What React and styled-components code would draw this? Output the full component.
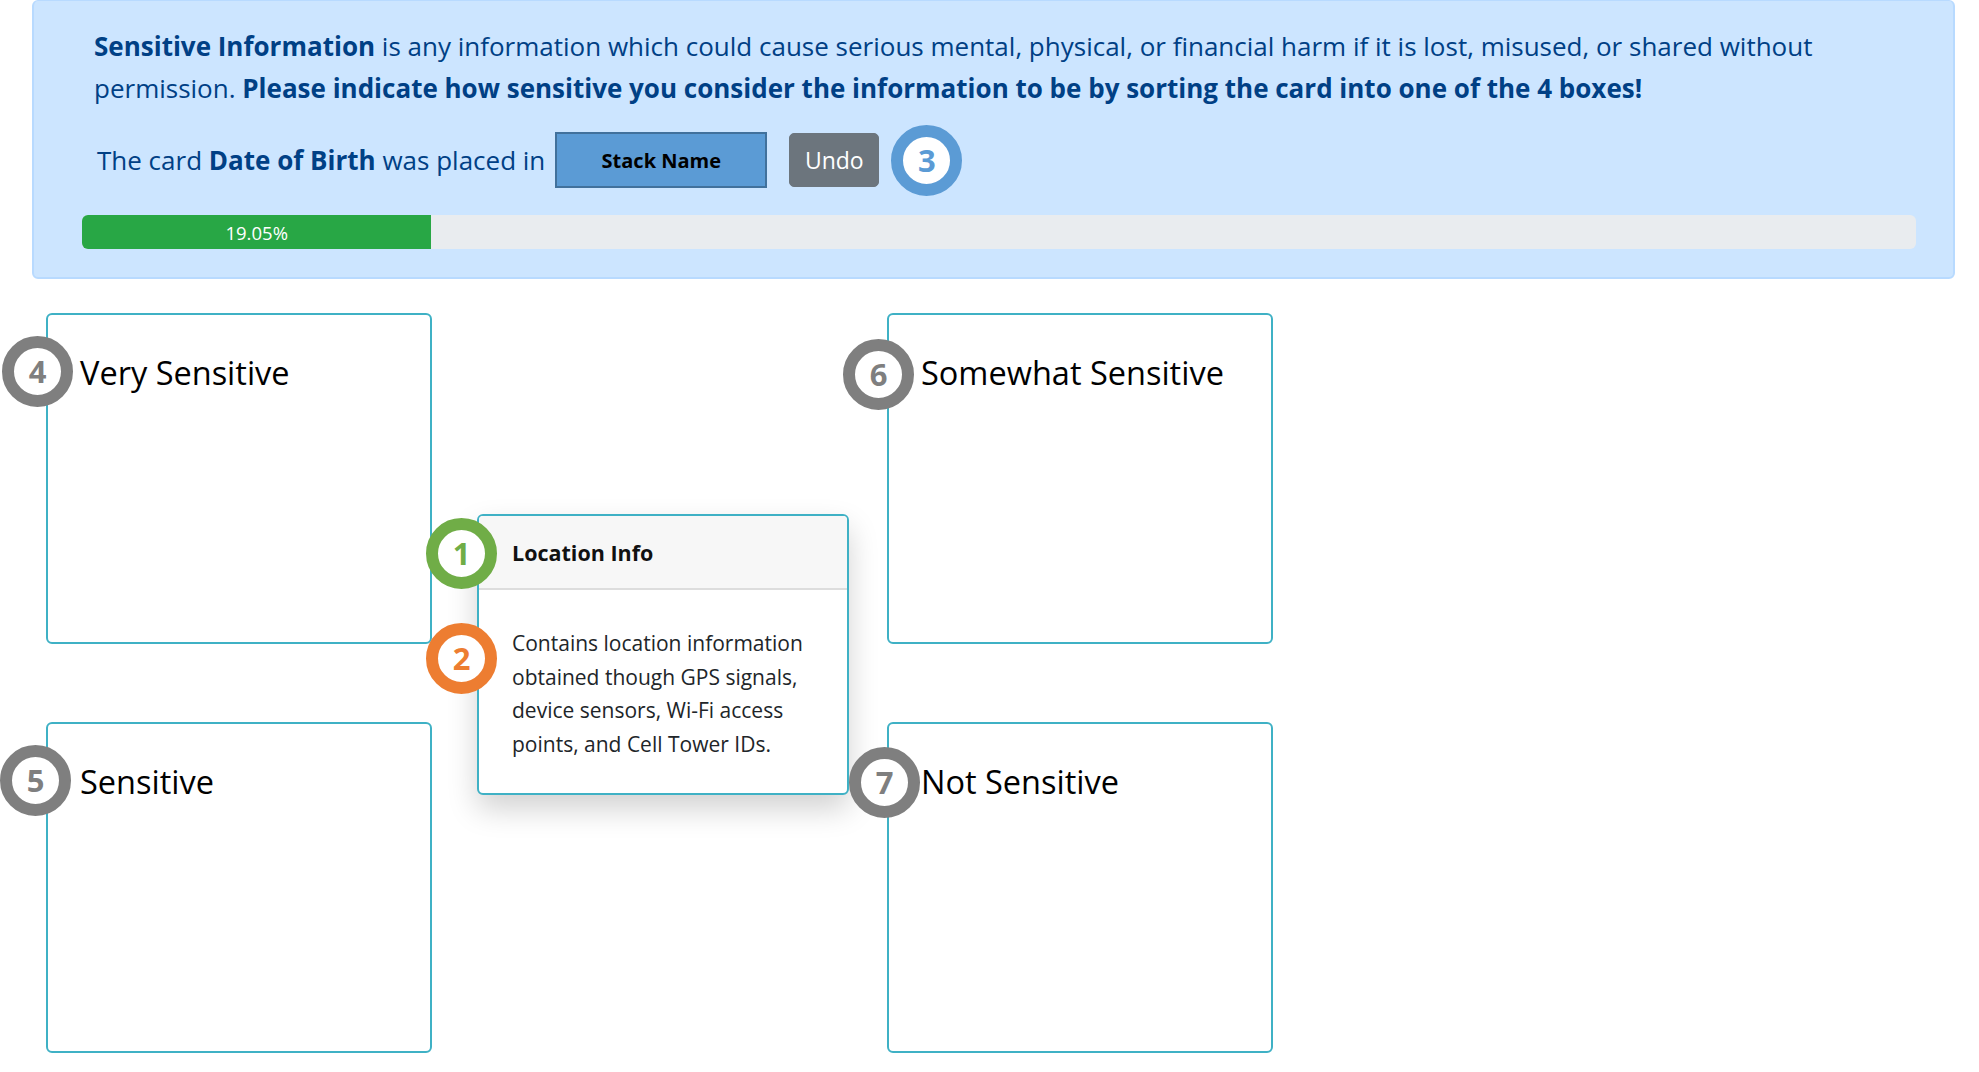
import React from "react";
import styled, { createGlobalStyle } from "styled-components";

const GlobalStyle = createGlobalStyle`
  body {
    margin: 0;
    background: #ffffff;
    font-family: "Open Sans", "Noto Sans", sans-serif;
    color: #212529;
  }
`;

const stacks = [
  { name: "Very Sensitive", num: 4, col: 1, row: 1, bx: -46, by: 21 },
  { name: "Somewhat Sensitive", num: 6, col: 3, row: 1, bx: -46, by: 24 },
  { name: "Sensitive", num: 5, col: 1, row: 2, bx: -48, by: 21 },
  { name: "Not Sensitive", num: 7, col: 3, row: 2, bx: -40, by: 23 },
];

const progress = 19.05;

export default function App() {
  return <Page>
    <GlobalStyle />
    <Alert>
      <Intro>
        <strong>Sensitive Information</strong> is any information which could cause serious mental, physical, or financial harm if it is lost, misused, or shared without<br />
        permission. <strong>Please indicate how sensitive you consider the information to be by sorting the card into one of the 4 boxes!</strong>
      </Intro>
      <PlacedRow>
        <span>The card <strong>Date of Birth</strong> was placed in</span>
        <StackButton>Stack Name</StackButton>
        <UndoButton>Undo</UndoButton>
        <Marker color="#5b9bd5">3</Marker>
      </PlacedRow>
      <Track>
        <Bar style={{ width: `${progress}%` }}>{progress}%</Bar>
      </Track>
    </Alert>

    <Board>
      {stacks.map(({ name, num, col, row, bx, by }) =>
        <Stack key={name} $col={col} $row={row}>
          <Marker color="#7f7f7f" $float $left={bx} $top={by}>{num}</Marker>
          <StackTitle>{name}</StackTitle>
        </Stack>
      )}

      <Card>
        <Marker color="#70ad47" $float $left={-53} $top={2}>1</Marker>
        <Marker color="#ed7d31" $float $left={-53} $top={107}>2</Marker>
        <CardHeader>Location Info</CardHeader>
        <CardBody>
          Contains location information obtained though GPS signals, device sensors, Wi-Fi access points, and Cell Tower IDs.
        </CardBody>
      </Card>
    </Board>
  </Page>
}

const Page = styled.div`
  padding: 0 24px 20px 32px;
`;

const Alert = styled.div`
  background: #cce5ff;
  border: 2px solid #b8daff;
  border-top-width: 1px;
  border-radius: 6px;
  color: #004085;
  padding: 24px 37px 28px 48px;
`;

const Intro = styled.p`
  margin: 0 0 0 12px;
  font-size: 26px;
  line-height: 42px;
  white-space: nowrap;
  strong {
    font-weight: 700;
  }
`;

const PlacedRow = styled.div`
  display: flex;
  align-items: center;
  margin: 21px 0 0 15px;
  font-size: 26px;
  height: 60px;
  strong {
    font-weight: 700;
  }
`;

const StackButton = styled.div`
  box-sizing: border-box;
  width: 212px;
  height: 56px;
  margin-left: 10px;
  display: flex;
  align-items: center;
  justify-content: center;
  background: #5b9bd5;
  border: 2px solid #41719c;
  color: #000;
  font-weight: 700;
  font-size: 20px;
`;

const UndoButton = styled.button`
  width: 90px;
  height: 54px;
  margin: 0 12px 0 22px;
  background: #6c757d;
  border: 1px solid #6c757d;
  border-radius: 5px;
  color: #fff;
  font-family: "Open Sans", sans-serif;
  font-size: 23px;
  padding: 0;
`;

const Marker = styled.div`
  box-sizing: border-box;
  flex: none;
  width: 71px;
  height: 71px;
  border-radius: 50%;
  border: 12px solid ${p => p.color};
  background: #fff;
  color: ${p => p.color};
  display: flex;
  align-items: center;
  justify-content: center;
  font-size: 31px;
  font-weight: 700;
  line-height: 1;
  ${p => p.$float && `
    position: absolute;
    left: ${p.$left}px;
    top: ${p.$top}px;
    z-index: 2;
  `}
`;

const Track = styled.div`
  margin-top: 25px;
  height: 34px;
  background: #e9ecef;
  border-radius: 6px;
  overflow: hidden;
  display: flex;
`;

const Bar = styled.div`
  background: #28a745;
  color: #fff;
  font-size: 18.5px;
  display: flex;
  align-items: center;
  justify-content: center;
`;

const Board = styled.div`
  display: grid;
  grid-template-columns: 386px 455px 386px;
  grid-template-rows: 331px 331px;
  row-gap: 78px;
  margin: 34px 0 0 14px;
`;

const Stack = styled.div`
  position: relative;
  box-sizing: border-box;
  grid-column: ${p => p.$col};
  grid-row: ${p => p.$row};
  border: 2px solid #3fb1c5;
  border-radius: 6px;
  padding: 35px 0 0 32px;
`;

const StackTitle = styled.div`
  font-size: 32.5px;
  line-height: 46px;
  color: #000;
`;

const Card = styled.div`
  position: relative;
  box-sizing: border-box;
  grid-column: 2;
  grid-row: 1 / span 2;
  align-self: start;
  width: 372px;
  height: 281px;
  margin: 201px 0 0 45px;
  background: #fff;
  border: 2px solid #3fb1c5;
  border-radius: 6px;
  box-shadow: 0 14px 30px rgba(0, 0, 0, 0.18);
  z-index: 1;
`;

const CardHeader = styled.div`
  height: 74px;
  box-sizing: border-box;
  display: flex;
  align-items: center;
  padding-left: 33px;
  background: #f7f7f7;
  border-bottom: 2px solid #dddddd;
  border-radius: 4px 4px 0 0;
  font-weight: 700;
  font-size: 21.5px;
  color: #111;
`;

const CardBody = styled.div`
  padding: 37px 20px 0 33px;
  font-size: 21px;
  line-height: 33.5px;
  color: #212529;
`;
